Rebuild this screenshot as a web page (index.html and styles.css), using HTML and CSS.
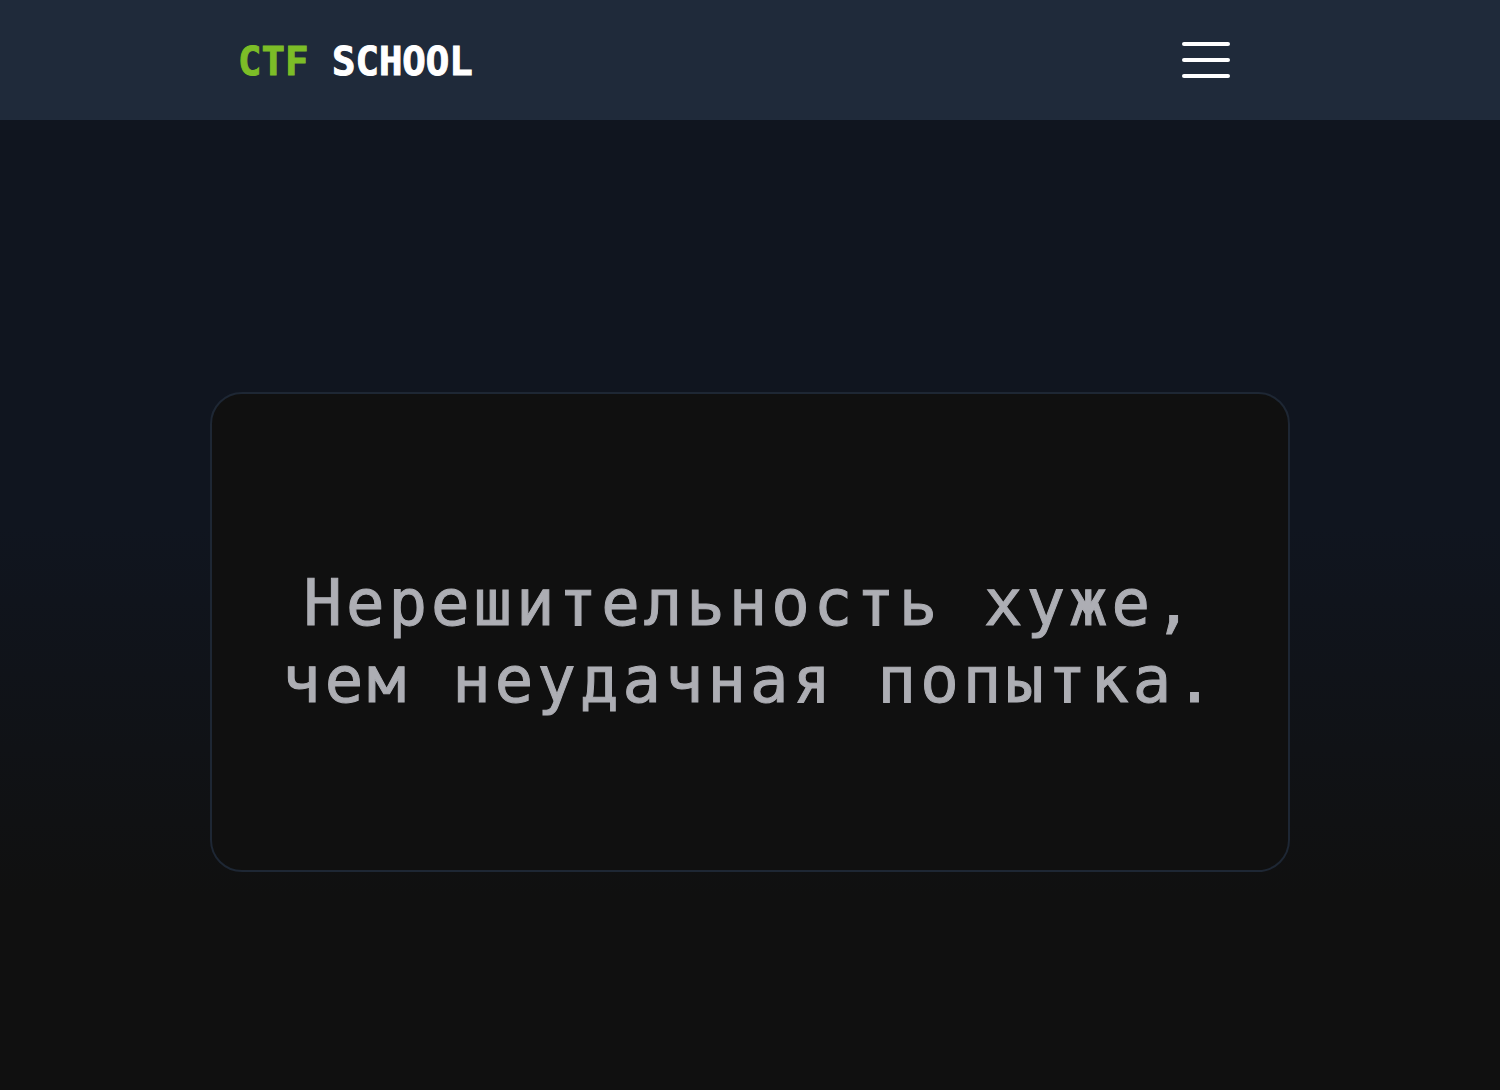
FILE: index.html
```html
<!DOCTYPE html>
<html lang="ru">
<head>
  <meta charset="utf-8">
  <meta name="viewport" content="width=device-width, initial-scale=1">
  <title>CTF School</title>
  <link rel="stylesheet" href="styles.css">
</head>
<body>
  <header class="header">
    <div class="header-inner">
      <a class="logo" href="#"><span class="logo-accent">CTF</span> SCHOOL</a>
      <button class="menu-button" type="button" aria-label="Меню">
        <span class="menu-line"></span>
        <span class="menu-line"></span>
        <span class="menu-line"></span>
      </button>
    </div>
  </header>
  <main class="hero">
    <section class="card">
      <p class="quote">Нерешительность хуже,<br>чем неудачная попытка.</p>
    </section>
  </main>
</body>
</html>
```
FILE: styles.css
```css
*,
*::before,
*::after {
  box-sizing: border-box;
}

body {
  display: flex;
  flex-direction: column;
  min-height: 100vh;
  margin: 0;
  background: #101010;
  font-family: "DejaVu Sans Mono", "Liberation Mono", monospace;
}

.header {
  background: #1f2a3a;
}

.header-inner {
  display: flex;
  align-items: center;
  justify-content: space-between;
  max-width: 1080px;
  min-height: 120px;
  margin: 0 auto;
  padding: 0 60px 0 28px;
}

.logo {
  padding-top: 3px;
  color: #ffffff;
  font-size: 39px;
  font-weight: 700;
  line-height: 48px;
  text-decoration: none;
  -webkit-text-stroke: 1px currentColor;
}

.logo-accent {
  color: #7cbd27;
}

.menu-button {
  display: flex;
  flex-direction: column;
  gap: 12px;
  padding: 0;
  border: 0;
  background: none;
  cursor: pointer;
}

.menu-line {
  width: 48px;
  height: 4px;
  border-radius: 2px;
  background: #ffffff;
}

.hero {
  flex: 1;
  padding: 272px 16px 64px;
  background: linear-gradient(#10151f 0%, #10151f 42%, #101010 80%);
}

.card {
  display: flex;
  align-items: center;
  justify-content: center;
  max-width: 1080px;
  min-height: 480px;
  margin: 0 auto;
  padding: 20px 0 0;
  border: 2px solid #1e2734;
  border-radius: 32px;
  background: #101010;
}

.quote {
  margin: 0;
  color: #adaeb4;
  font-size: 64px;
  line-height: 77px;
  letter-spacing: 4px;
  text-align: center;
  -webkit-text-stroke: 1px currentColor;
}
```
